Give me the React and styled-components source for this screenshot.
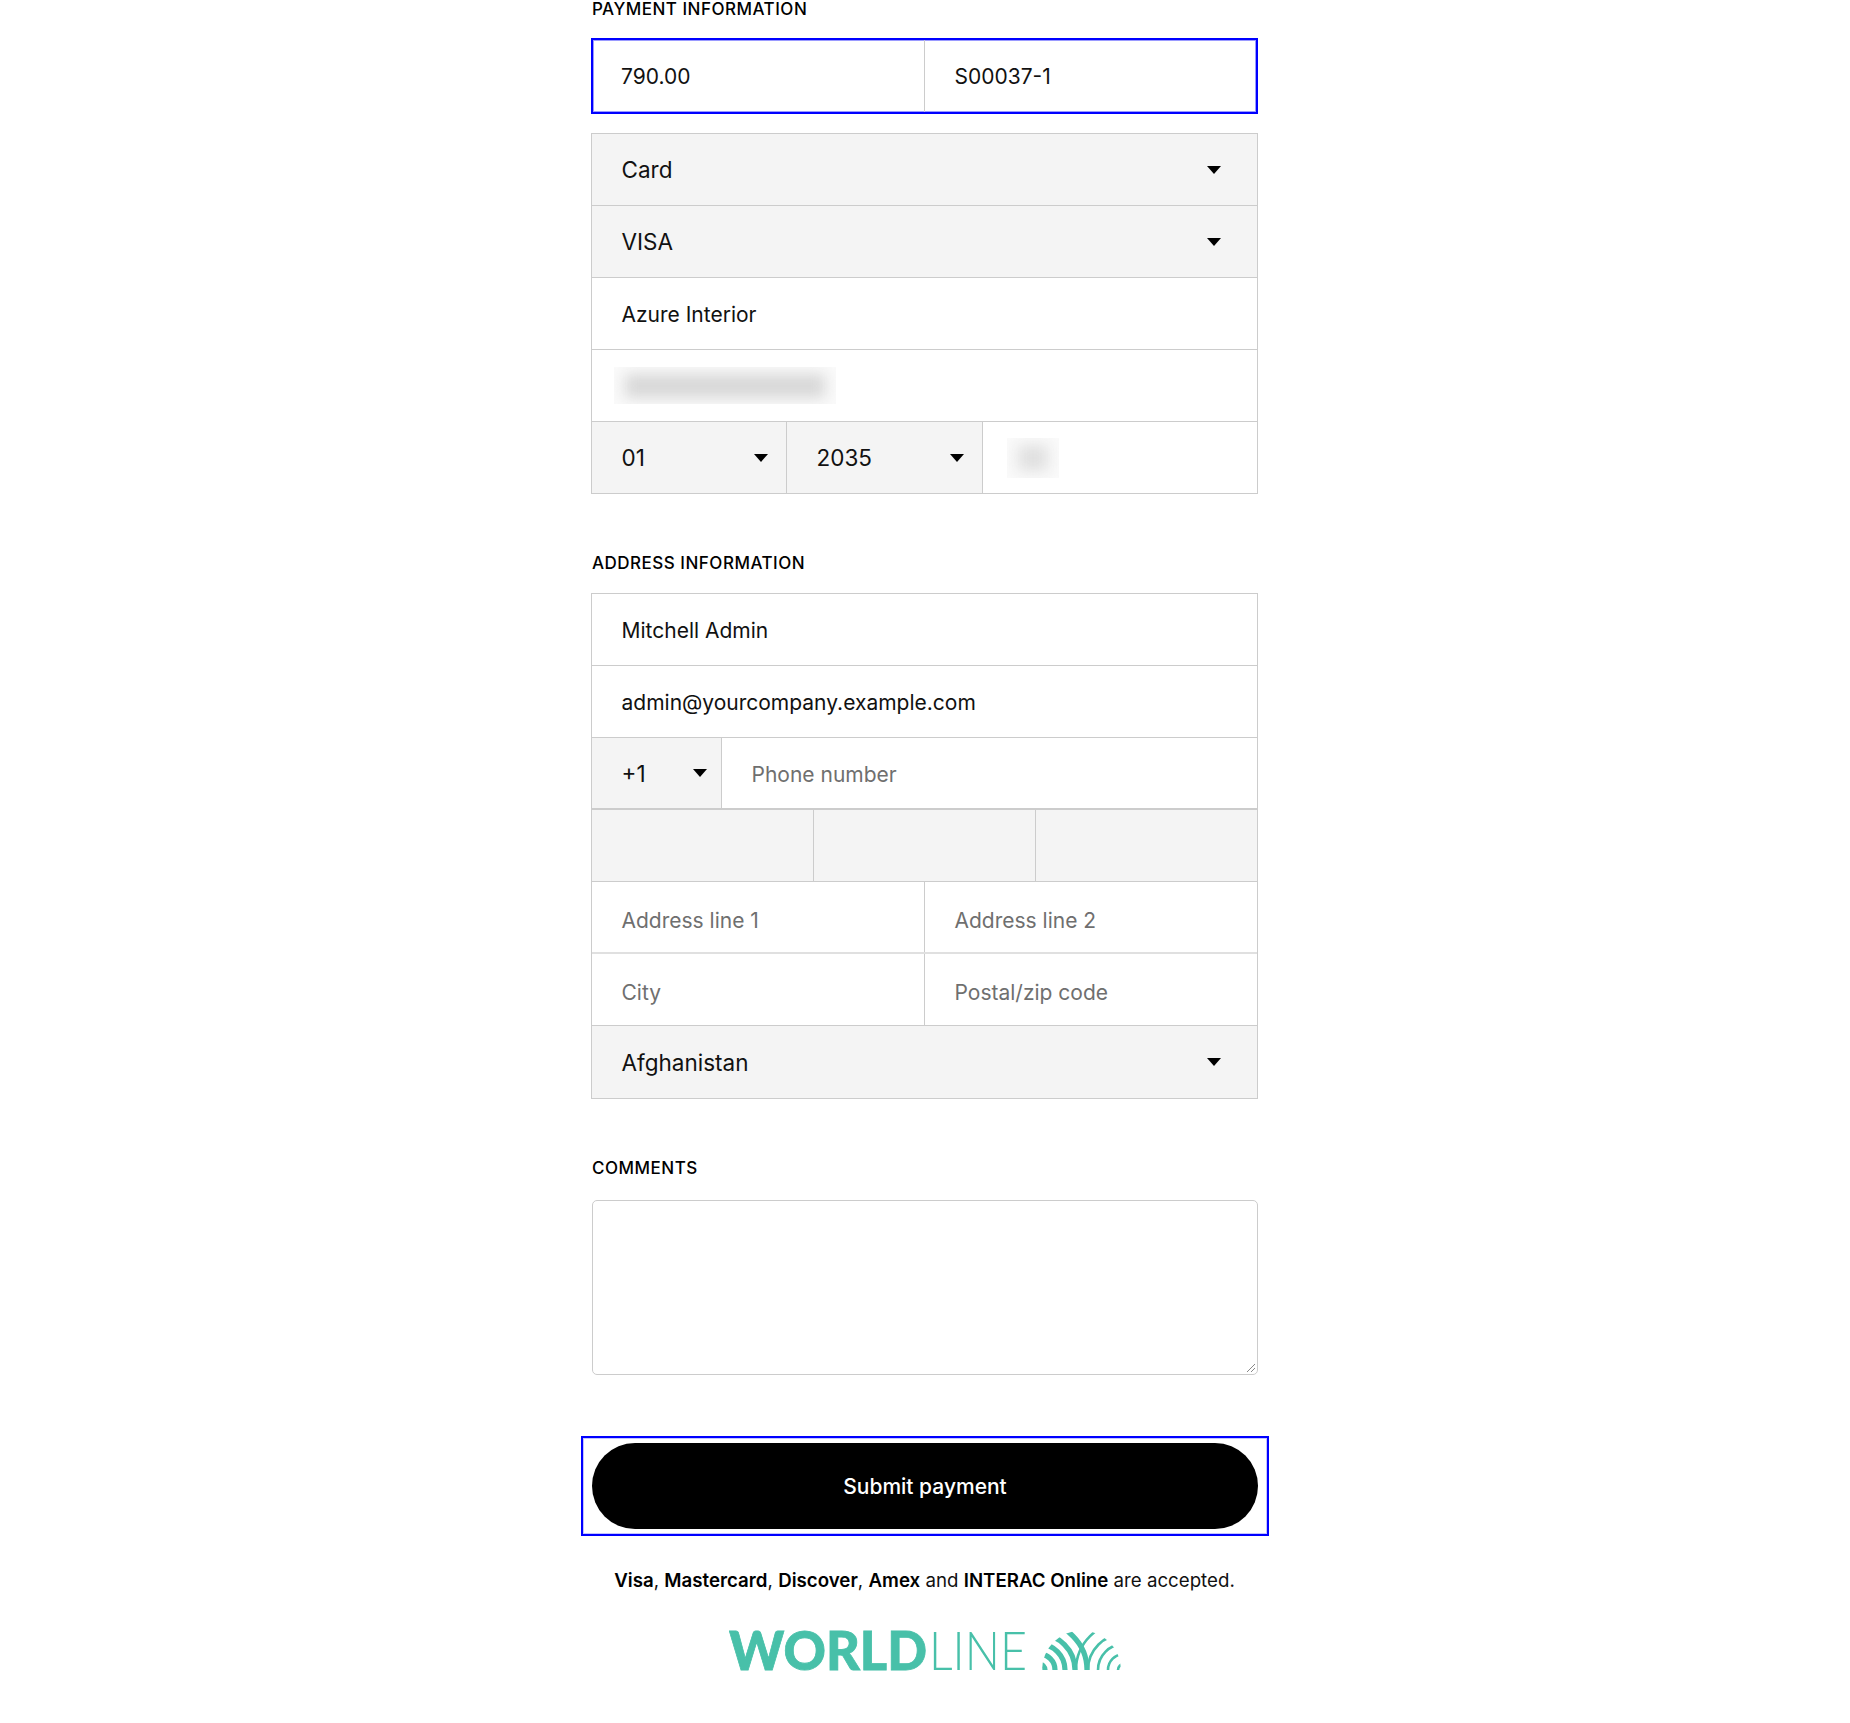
import React from "react";
import styled, { createGlobalStyle } from "styled-components";

const Global = createGlobalStyle`
  html, body { margin: 0; padding: 0; background: #fff; }
  body { font-family: Inter, "Liberation Sans", sans-serif; color: #111; }
  *, *::before, *::after { box-sizing: border-box; }
`;

const Page = styled.main`
  width: 667px;
  height: 1723px;
  margin: 0 0 0 591px;
  display: flex;
  flex-direction: column;
`;

const SectionLabel = styled.h2`
  flex: none;
  margin: ${(p) => p.$mt || 0}px 0 ${(p) => p.$mb || 20}px 1px;
  font-size: 17px;
  line-height: 18px;
  font-weight: 500;
  letter-spacing: 0.5px;
  color: #000;
  text-transform: uppercase;
`;

const Group = styled.section`
  flex: none;
  border: 1px solid #ccc;
  border-bottom: 0;
  display: flex;
  flex-direction: column;
`;

const FocusGroup = styled.section`
  flex: none;
  border: 2px solid #0000ff;
  box-shadow: inset 0 0 0 1px #9a9aff;
  display: flex;
  margin-bottom: 19px;
  height: 76px;
`;

const Row = styled.div`
  flex: none;
  display: flex;
  height: ${(p) => p.$h || 72}px;
  border-bottom: ${(p) => (p.$thick ? 2 : 1)}px solid ${(p) => p.$tone || "#ccc"};
`;

const Cell = styled.div`
  flex: ${(p) => (p.$w ? `0 0 ${p.$w}px` : "1 1 0")};
  min-width: 0;
  display: flex;
  align-items: center;
  padding: ${(p) => p.$drop || 0}px ${(p) => p.$pr || 29.5}px 0 ${(p) => p.$pl || 29.5}px;
  background: ${(p) => (p.$grey ? "#f4f4f4" : "transparent")};
  font-size: 21px;
  color: ${(p) => (p.$muted ? "#6f6f6f" : "#111")};
  justify-content: ${(p) => (p.$select ? "space-between" : "flex-start")};
  & + & { border-left: 1px solid #ccc; }
`;

const SelectText = styled.span`
  font-size: 22.5px;
  color: #111;
`;

const Caret = styled.svg`
  width: 14px;
  height: 8px;
  flex: none;
  fill: #000;
`;

const Arrow = () => (
  <Caret viewBox="0 0 14 8" aria-hidden="true"><path d="M0 0h14L7 8z" /></Caret>
);

const Redacted = styled.div`
  width: ${(p) => p.$w}px;
  height: ${(p) => p.$h}px;
  background: #fafafa;
  overflow: hidden;
  flex: none;
  display: flex;
  align-items: center;
  justify-content: center;
`;

const RedactedBar = styled.div`
  width: ${(p) => p.$w}px;
  height: ${(p) => p.$h}px;
  flex: none;
  background: ${(p) => p.$c};
  filter: blur(7px);
`;

const Comments = styled.div`
  flex: none;
  height: 175px;
  margin-left: 1px;
  border: 1px solid #ccc;
  border-radius: 5px;
  position: relative;
`;

const Grip = styled.svg`
  position: absolute;
  right: 1px;
  bottom: 1px;
  width: 10px;
  height: 10px;
  stroke: #888;
  stroke-width: 1;
  fill: none;
`;

const SubmitFrame = styled.div`
  flex: none;
  margin: 61px -11px 0 -10px;
  border: 2px solid #0000ff;
  box-shadow: inset 0 0 0 1px #c4c4ff;
  padding: 5px 9px;
  height: 100px;
  display: flex;
`;

const SubmitButton = styled.button`
  flex: 1;
  border: 0;
  border-radius: 44px;
  background: #000;
  color: #fff;
  font: 500 21px Inter, sans-serif;
`;

const Accepted = styled.p`
  flex: none;
  margin: 33px 0 0;
  text-align: center;
  font-size: 18.7px;
  line-height: 24px;
  color: #111;
  b { font-weight: 600; color: #000; }
`;

const LogoRow = styled.div`
  flex: none;
  margin-top: 23px;
  display: flex;
  padding-left: 138px;
`;

const Logo = styled.svg`
  width: 392px;
  height: 68px;
  display: block;
  flex: none;
`;

const R = [6, 16, 26, 36, 48];

const Worldline = () => (
  <Logo viewBox="0 0 392 68" role="img" aria-label="Worldline">
    <defs>
      <clipPath id="dome"><path d="M313 54 A39.5 39.5 0 0 1 392 54 Z" /></clipPath>
    </defs>
    <text x="0" y="54" fontFamily="Lato, sans-serif" fontWeight="900" fontSize="53" fill="#48c0a9" stroke="#48c0a9" strokeWidth="0.8" textLength="198" lengthAdjust="spacingAndGlyphs">WORLD</text>
    <text x="200" y="54" fontFamily="Lato, sans-serif" fontWeight="300" fontSize="53" fill="#48c0a9" textLength="98" lengthAdjust="spacingAndGlyphs">LINE</text>
    <g clipPath="url(#dome)" fill="none" stroke="#48c0a9">
      <g strokeWidth="2.6">
        {R.map((r) => <circle key={r} cx="395" cy="54" r={r} />)}
      </g>
      <g strokeWidth="5.2">
        {R.map((r) => <circle key={r} cx="310" cy="54" r={r} />)}
      </g>
    </g>
  </Logo>
);

export default function App() {
  return (
    <Page>
      <Global />
      <SectionLabel $mb={20}>Payment information</SectionLabel>
      <FocusGroup>
        <Cell $w={331} $pl={28}>790.00</Cell>
        <Cell>S00037-1</Cell>
      </FocusGroup>
      <Group>
        <Row><Cell $grey $select $pr={36}><SelectText>Card</SelectText><Arrow /></Cell></Row>
        <Row><Cell $grey $select $pr={36}><SelectText>VISA</SelectText><Arrow /></Cell></Row>
        <Row><Cell $drop={2}>Azure Interior</Cell></Row>
        <Row><Cell $pl={22}><Redacted $w={222} $h={37}><RedactedBar $w={200} $h={24} $c="#d8d8d8" /></Redacted></Cell></Row>
        <Row>
          <Cell $w={194} $grey $select $pr={18}><SelectText>01</SelectText><Arrow /></Cell>
          <Cell $w={196} $grey $select $pr={18}><SelectText>2035</SelectText><Arrow /></Cell>
          <Cell $pl={24}><Redacted $w={52} $h={40}><RedactedBar $w={30} $h={26} $c="#e0e0e0" /></Redacted></Cell>
        </Row>
      </Group>

      <SectionLabel $mt={60} $mb={21}>Address information</SectionLabel>
      <Group>
        <Row><Cell $drop={2}>Mitchell Admin</Cell></Row>
        <Row><Cell $drop={2}>admin@yourcompany.example.com</Cell></Row>
        <Row $thick>
          <Cell $w={129} $grey $select $pr={14}><SelectText>+1</SelectText><Arrow /></Cell>
          <Cell $muted $drop={2}>Phone number</Cell>
        </Row>
        <Row>
          <Cell $grey />
          <Cell $grey />
          <Cell $grey />
        </Row>
        <Row $thick $tone="#e0e0e0">
          <Cell $muted $drop={7}>Address line 1</Cell>
          <Cell $muted $drop={7}>Address line 2</Cell>
        </Row>
        <Row>
          <Cell $muted $drop={5}>City</Cell>
          <Cell $muted $drop={5}>Postal/zip code</Cell>
        </Row>
        <Row $h={73}><Cell $grey $select $pr={36}><SelectText>Afghanistan</SelectText><Arrow /></Cell></Row>
      </Group>

      <SectionLabel $mt={60} $mb={23}>Comments</SectionLabel>
      <Comments>
        <Grip viewBox="0 0 10 10" aria-hidden="true"><path d="M1 9L9 1M5 9L9 5" /></Grip>
      </Comments>

      <SubmitFrame><SubmitButton>Submit payment</SubmitButton></SubmitFrame>
      <Accepted>
        <b>Visa</b>, <b>Mastercard</b>, <b>Discover</b>, <b>Amex</b> and <b>INTERAC Online</b> are accepted.
      </Accepted>
      <LogoRow><Worldline /></LogoRow>
    </Page>
  );
}
